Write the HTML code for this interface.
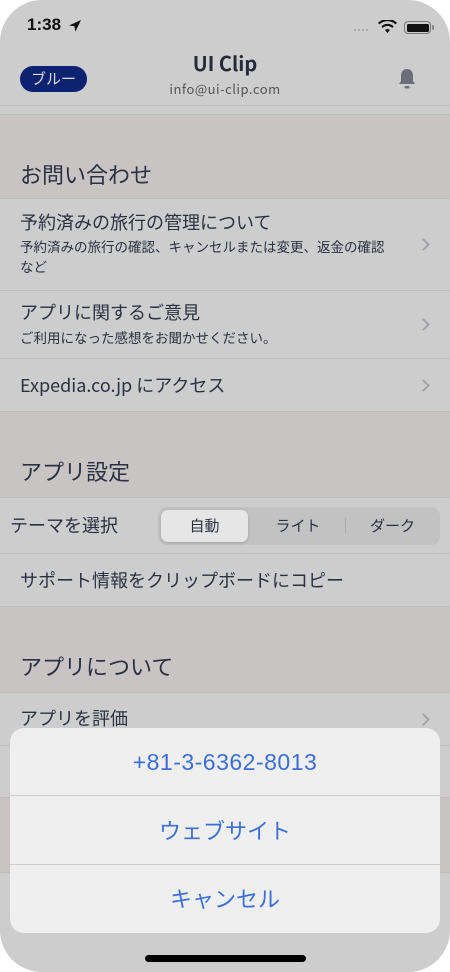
<!DOCTYPE html><html><head><meta charset="utf-8"><style>
*{margin:0;padding:0;box-sizing:border-box}
body{width:450px;height:972px;background:#fff;font-family:"Noto Sans CJK JP","Liberation Sans",sans-serif;color:#2b3142;overflow:hidden}
.dev{position:absolute;left:0;top:0;width:450px;height:972px;border-radius:42px;overflow:hidden;background:#cdcdcd}
.abs{position:absolute}
.sec{position:absolute;left:0;width:450px;background:#c8c4c4}
.row{position:absolute;left:0;width:450px;background:#cdcdcd;border-top:1px solid #bdbdbd}
.t{position:absolute;left:20px;font-size:18px;white-space:nowrap;line-height:24px}
.s{position:absolute;left:20px;font-size:13.5px;line-height:20px}
.h{position:absolute;left:20px;font-size:22px;line-height:30px}
.chev{position:absolute;right:22px;width:9px;height:9px;border-right:2px solid #a4a4a8;border-top:2px solid #a4a4a8;transform:rotate(45deg)}
</style></head><body><div class="dev">
<div class="abs" style="left:27px;top:15px;font-size:17px;font-weight:bold;color:#111;font-family:'Liberation Sans',sans-serif">1:38</div>
<svg class="abs" style="left:68px;top:19px" width="14" height="14" viewBox="0 0 14 14"><path d="M13 1L1 6.5l5.5.8.8 5.5z" fill="#111"/></svg>
<div class="abs" style="left:354px;top:29px;width:14px;border-top:2px dotted #aaa"></div>
<svg class="abs" style="left:378px;top:20px" width="19" height="14" viewBox="0 0 19 14"><path d="M9.5 13l2.5-3a3.5 3.5 0 0 0-5 0zM4.8 8a6.5 6.5 0 0 1 9.4 0l1.5-1.7a9 9 0 0 0-12.4 0zM1.5 4.4a11.5 11.5 0 0 1 16 0L19 2.7a14 14 0 0 0-19 0z" fill="#111"/></svg>
<div class="abs" style="left:404px;top:21px;width:27px;height:13px;border:1.5px solid #777;border-radius:4px;padding:1.5px"><div style="background:#111;height:100%;border-radius:1.5px"></div></div>
<div class="abs" style="left:432px;top:25px;width:2px;height:5px;background:#888;border-radius:1px"></div>
<div class="abs" style="left:20px;top:66px;width:67px;height:26px;background:#0d2270;border-radius:13px;color:#ddd;font-size:15px;text-align:center;line-height:26px">ブルー</div>
<div class="abs" style="left:0;width:450px;top:48px;text-align:center;font-size:20px;font-weight:bold;color:#222a3c;line-height:30px">UI Clip</div>
<div class="abs" style="left:0;width:450px;top:79px;text-align:center;font-size:13px;color:#555;letter-spacing:.5px;line-height:20px">info@ui-clip.com</div>
<svg class="abs" style="left:396px;top:67px" width="22" height="24" viewBox="0 0 22 24"><path d="M11 2c-4 0-6 3-6 7v5l-2 3h16l-2-3V9c0-4-2-7-6-7z" fill="#6d6f78"/><rect x="8.5" y="19" width="5" height="2.5" rx="1.2" fill="#6d6f78"/></svg>
<div class="abs" style="left:0;top:105px;width:450px;height:1px;background:#bcbcbc"></div>
<div class="sec" style="top:114px;height:84px;border-top:1px solid #bcbcbc"><div class="h" style="top:44px">お問い合わせ</div></div>
<div class="row" style="top:198px;height:92px"><div class="t" style="top:11px">予約済みの旅行の管理について</div><div class="s" style="top:37px;width:400px">予約済みの旅行の確認、キャンセルまたは変更、返金の確認<br>など</div><div class="chev" style="top:41px"></div></div>
<div class="row" style="top:290px;height:68px"><div class="t" style="top:9px">アプリに関するご意見</div><div class="s" style="top:36px">ご利用になった感想をお聞かせください。</div><div class="chev" style="top:29px"></div></div>
<div class="row" style="top:358px;height:53px"><div class="t" style="top:14px">Expedia.co.jp にアクセス</div><div class="chev" style="top:22px"></div></div>
<div class="sec" style="top:411px;height:86px;border-top:1px solid #bcbcbc"><div class="h" style="top:44px">アプリ設定</div></div>
<div class="row" style="top:497px;height:56px"><div class="t" style="left:10px;top:15px">テーマを選択</div>
<div class="abs" style="left:158px;top:9px;width:282px;height:38px;background:#c2c2c2;border-radius:9px">
<div class="abs" style="left:3px;top:3px;width:87px;height:32px;background:#e6e6e6;border-radius:7px;box-shadow:0 1px 3px rgba(0,0,0,.15)"></div>
<div class="abs" style="left:0;width:93px;top:8px;text-align:center;font-size:15px;line-height:22px">自動</div>
<div class="abs" style="left:93px;width:94px;top:8px;text-align:center;font-size:15px;line-height:22px">ライト</div>
<div class="abs" style="left:187px;top:11px;width:1px;height:16px;background:#aaa"></div>
<div class="abs" style="left:187px;width:95px;top:8px;text-align:center;font-size:15px;line-height:22px">ダーク</div></div></div>
<div class="row" style="top:553px;height:53px"><div class="t" style="top:14px">サポート情報をクリップボードにコピー</div></div>
<div class="sec" style="top:606px;height:86px;border-top:1px solid #bcbcbc"><div class="h" style="top:44px">アプリについて</div></div>
<div class="row" style="top:692px;height:53px"><div class="t" style="top:13px">アプリを評価</div><div class="chev" style="top:22px"></div></div>
<div class="row" style="top:745px;height:52px"></div>
<div class="sec" style="top:797px;height:75px;border-top:1px solid #bcbcbc"></div>
<div class="row" style="top:872px;height:100px"></div>
<div class="abs" style="left:10px;top:728px;width:430px;height:205px;background:#efefef;border-radius:14px;overflow:hidden;color:#3a6fd8;font-size:22px;text-align:center">
<div style="height:68px;line-height:68px;border-bottom:1px solid #cfcfcf;font-family:'Liberation Sans',sans-serif;font-size:23px;letter-spacing:0.5px">+81-3-6362-8013</div>
<div style="height:69px;line-height:69px;border-bottom:1px solid #cfcfcf">ウェブサイト</div>
<div style="height:68px;line-height:66px">キャンセル</div></div>
<div class="abs" style="left:145px;top:955px;width:161px;height:7px;background:#000;border-radius:4px"></div>
</div></body></html>
